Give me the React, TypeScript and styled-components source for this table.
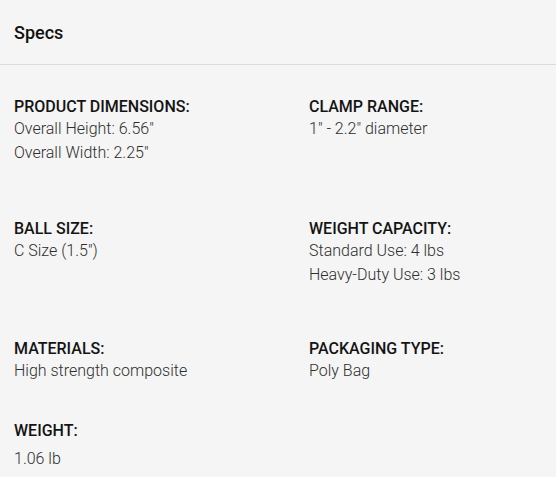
import React from "react";
import styled, { createGlobalStyle } from "styled-components";

const Global = createGlobalStyle`
  html, body { margin: 0; padding: 0; background: #ffffff; }
  body { font-family: Roboto, "Liberation Sans", Arial, sans-serif; }
`;

const Panel = styled.section`
  width: 556px;
  height: 477px;
  background: #f5f5f5;
  overflow: hidden;
`;

const Header = styled.header`
  display: flex;
  align-items: center;
  padding: 0 14px;
  border-bottom: 1px solid #dcdcdc;
  box-sizing: border-box;
  height: 65px;
`;

const Title = styled.h2`
  margin: 0;
  font-size: 18px;
  font-weight: 500;
  color: #111111;
  padding-top: 1px;
`;

const Body = styled.div`
  padding: 32px 0 0 14px;
`;

const Row = styled.div<{ $after: number }>`
  display: grid;
  grid-template-columns: 295px 1fr;
  margin-bottom: ${(p) => p.$after}px;
`;

const Cell = styled.div``;

const Label = styled.div`
  font-size: 16px;
  line-height: 20px;
  font-weight: 500;
  color: #141414;
`;

const Values = styled.div<{ $offset: number }>`
  margin-top: ${(p) => p.$offset}px;
`;

const Value = styled.div`
  font-size: 16px;
  line-height: 24px;
  font-weight: 300;
  color: #2e2e2e;
`;

type Spec = { label: string; values: string[]; offset?: number };

const rows: { after: number; cells: Spec[] }[] = [
  {
    after: 54,
    cells: [
      { label: "PRODUCT DIMENSIONS:", values: ['Overall Height: 6.56"', 'Overall Width: 2.25"'] },
      { label: "CLAMP RANGE:", values: ['1" - 2.2" diameter'] },
    ],
  },
  {
    after: 52,
    cells: [
      { label: "BALL SIZE:", values: ['C Size (1.5")'] },
      { label: "WEIGHT CAPACITY:", values: ["Standard Use: 4 lbs", "Heavy-Duty Use: 3 lbs"] },
    ],
  },
  {
    after: 38,
    cells: [
      { label: "MATERIALS:", values: ["High strength composite"] },
      { label: "PACKAGING TYPE:", values: ["Poly Bag"] },
    ],
  },
  {
    after: 0,
    cells: [{ label: "WEIGHT:", values: ["1.06 lb"], offset: 6 }],
  },
];

export default function App() {
  return (
    <>
      <Global />
      <Panel>
        <Header>
          <Title>Specs</Title>
        </Header>
        <Body>
          {rows.map((row, i) => (
            <Row key={i} $after={row.after}>
              {row.cells.map((c) => (
                <Cell key={c.label}>
                  <Label>{c.label}</Label>
                  <Values $offset={c.offset ?? 0}>
                    {c.values.map((v) => (
                      <Value key={v}>{v}</Value>
                    ))}
                  </Values>
                </Cell>
              ))}
            </Row>
          ))}
        </Body>
      </Panel>
    </>
  );
}
